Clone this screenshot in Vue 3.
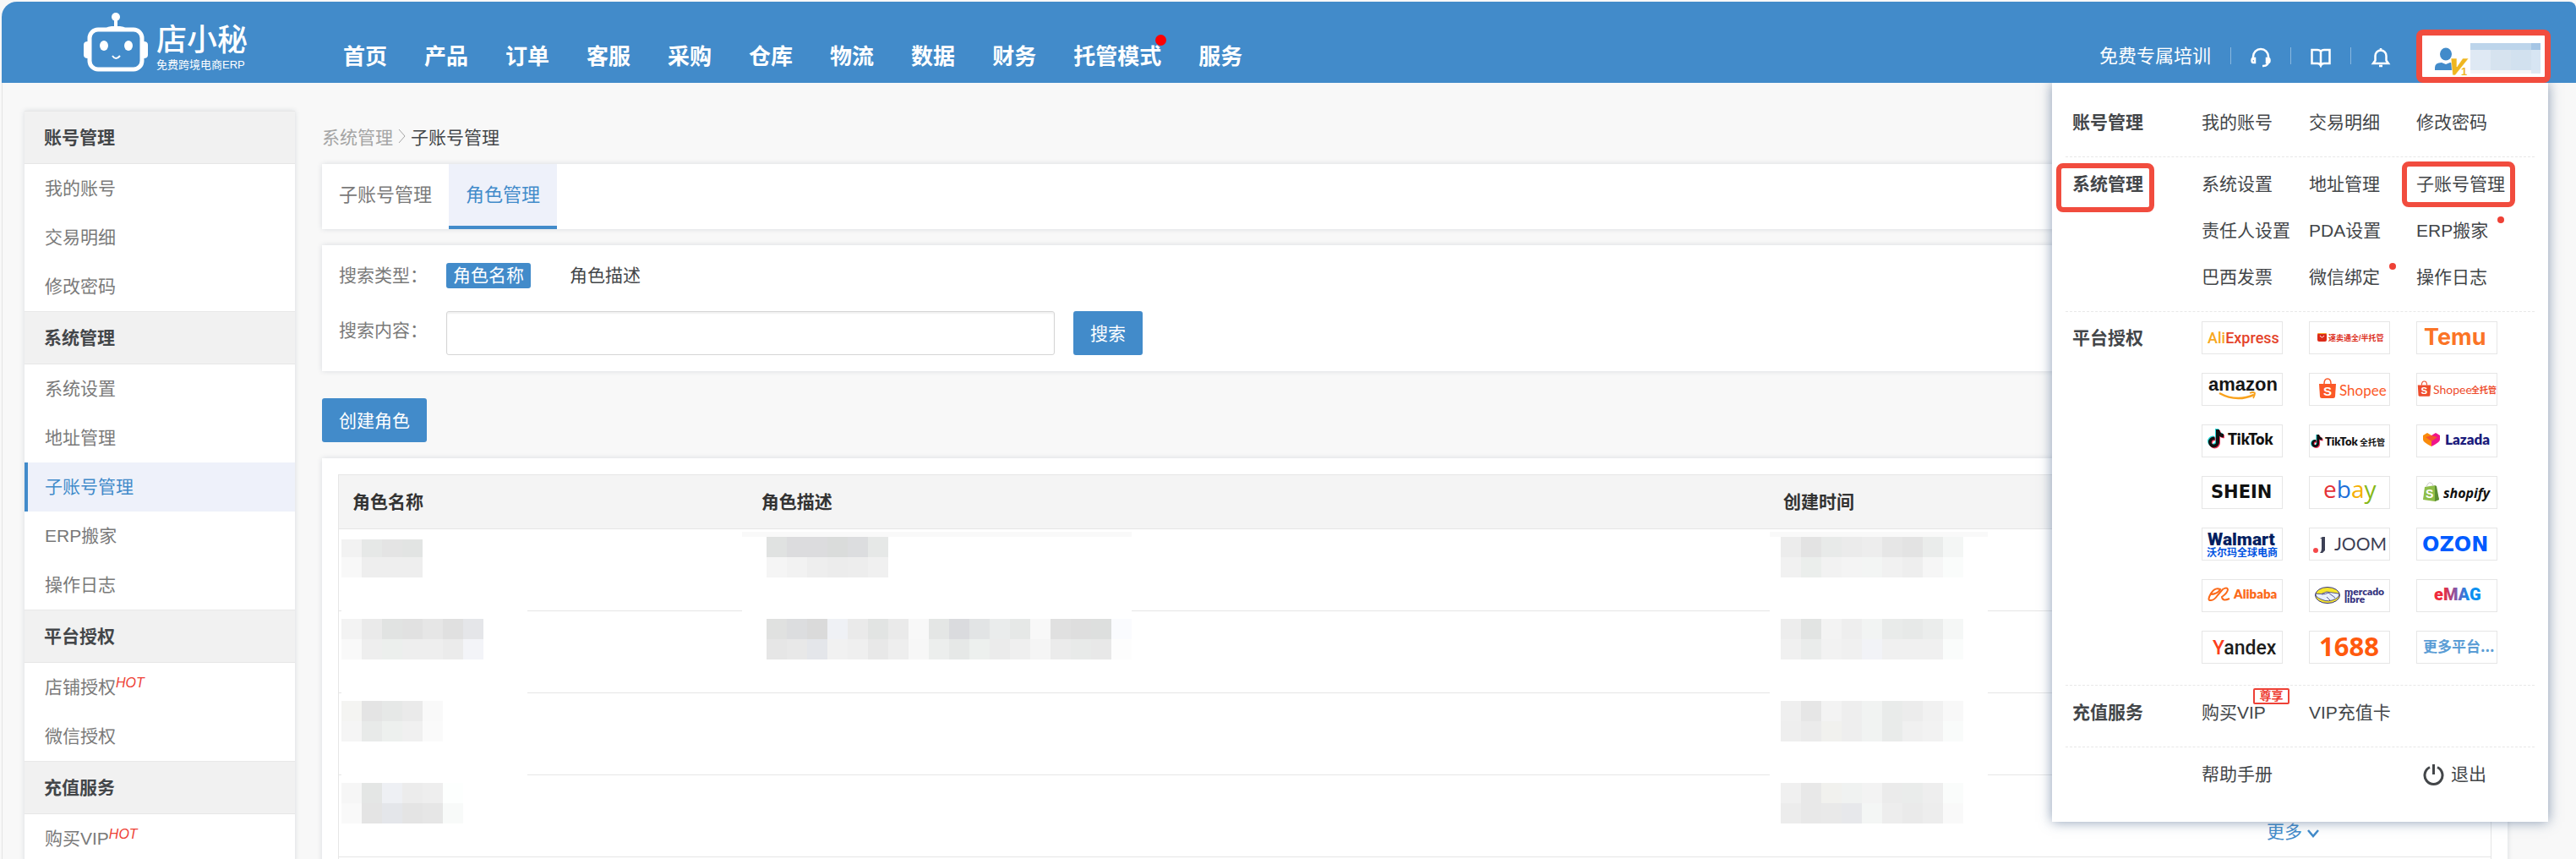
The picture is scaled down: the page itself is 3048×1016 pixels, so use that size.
<script setup>
import { ref } from 'vue';

const keyword = ref('');
const searchType = ref('角色名称');

const navs = [
  { name: '首页' }, { name: '产品' }, { name: '订单' }, { name: '客服' },
  { name: '采购' }, { name: '仓库' }, { name: '物流' }, { name: '数据' },
  { name: '财务' }, { name: '托管模式', dot: true }, { name: '服务' },
];

const sideMenus = [
  { title: '账号管理', items: [{ name: '我的账号' }, { name: '交易明细' }, { name: '修改密码' }] },
  {
    title: '系统管理',
    items: [
      { name: '系统设置' }, { name: '地址管理' }, { name: '子账号管理', active: true },
      { name: 'ERP搬家' }, { name: '操作日志' },
    ],
  },
  { title: '平台授权', items: [{ name: '店铺授权', hot: true }, { name: '微信授权' }] },
  { title: '充值服务', items: [{ name: '购买VIP', hot: true }] },
];

const systemLinks = [
  { name: '系统设置' }, { name: '地址管理' }, { name: '子账号管理', mark: true },
  { name: '责任人设置' }, { name: 'PDA设置' }, { name: 'ERP搬家', dot: true },
  { name: '巴西发票' }, { name: '微信绑定', dot: true }, { name: '操作日志' },
];

// masked cell values: two lines of 24px tiles, first is the height of the upper line
const rows = [
  {
    name: { first: 21, tiles: ['#f2f2f2 #e6e8e7 #e4e4e4 #e2e4e3', '#f8f8f8 #eeeeee #eeeeee #eeeeee'] },
    desc: { tiles: ['#e0e2e1 #dcdcde #dcdcde #dadcdb #dcdddf #e6e8e7', '#f5f5f5 #f2f2f2 #eeeeee #ececec #ededed #f0f0f0'] },
    time: { tiles: ['#ececec #e3e3e3 #e8eae9 #ebebeb #ededed #e6e6e6 #e3e3e3 #eaeceb #f4f6f5', '#f1f1f1 #ebeeec #f2f2f2 #f4f4f4 #f3f5f4 #f1f1f1 #eeeeee #f6f6f6 #fafcfb'] },
    bar: true,
  },
  {
    name: { tiles: ['#f3f3f3 #eaeaea #e1e3e2 #e1e1e1 #e6e6e6 #e0e0e0 #e5e6e9', '#f9f9f9 #eeeeee #ecefed #eeeeee #eeeeee #ebebeb #f3f4f8'] },
    desc: { tiles: ['#e0e1e0 #dcdddf #dadada #eff1f5 #eaeaea #e2e4e3 #eaeaea #f8f8f8 #e4e6e5 #dadbde #e2e4e5 #eaecec #e6e8e7 #f8f8f8 #e0e0e0 #dedede #dddfde #fafbfe', '#e6e6e6 #e8e8e8 #e4e6ea #f1f1f1 #efefef #e8e8e8 #eeeeee #f7f7f7 #eceeed #e6e8e7 #edf0ee #ebebeb #efefef #f5f5f5 #ebebeb #e8eae9 #e8e8e8 #fdfdfd'] },
    time: { tiles: ['#ededed #e2e4e3 #f3f3f3 #eeeeee #f2f4f3 #e9ebea #e7e9e8 #ebedec #f5f7f6', '#f0f0f0 #eaeceb #f2f2f2 #f0f0f0 #f2f3f7 #f0f0f0 #f0f0f0 #f0f0f0 #fafcfb'] },
  },
  {
    name: { tiles: ['#f4f4f2 #e4e4e4 #e6e8e7 #eaeaea #f9f9f9', '#f5f5f5 #e8eae9 #edf0ee #f0f0f0 #fafafa'] },
    time: { tiles: ['#efefef #e6e6e6 #f3f3f3 #eeeeee #f1f3f2 #e9ebea #ececec #f1f1f1 #f8f8f8', '#eeeeee #ebebeb #f1f1ee #eeeeee #f1f3f2 #e9ebea #f0f0f0 #f2f2f2 #f9fbfa'] },
  },
  {
    name: { tiles: ['#f6f6f6 #e4e6e5 #eef0f4 #ececec #eeeeee #fdfffe', '#f9f9f9 #e4e4e4 #e4e6ea #e4e4e4 #e6e6e6 #f8faf9'] },
    time: { tiles: ['#f0f0f0 #e8e8e8 #f1f1ee #f0f2f1 #f3f3f3 #ebebeb #eaeceb #eeeeee #fafcfb', '#ececec #e8e8e8 #e9e9e9 #e7e8eb #f4f6f5 #ededed #eaeaea #ededed #f9f9f9'] },
    more: true,
  },
  {},
];

const cols = ['name', 'desc', 'time'];

const toTiles = (cell) => {
  const first = cell.first || 24;
  return cell.tiles.flatMap((line, i) =>
    line.split(' ').map((fill, x) => ({ fill, x: x * 24, y: i ? 24 : 24 - first, h: i ? 24 : first }))
  );
};

const notePath = 'M9 0h4c.3 3 2 5 5 5.3v4c-2 0-3.600-.6-5-1.600v7.300a6.500 6.500 0 1 1-6.500-6.500l1 .1v4a2.600 2.600 0 1 0 1.500 2.400z';
const bagPath = 'M1 6h20l-1 15q-.2 2-2.200 2H4.200Q2.200 23 2 21z';
</script>

<template>
  <div class="page">
    <header class="header">
      <a class="logo" href="#">
        <svg width="76" height="70" viewBox="0 0 76 70" fill="none">
          <ellipse cx="38" cy="5" rx="5" ry="5" fill="#fff" />
          <path d="M38 8v10" stroke="#fff" stroke-width="4" />
          <path d="M25 19q4-3 8-3h10q4 0 8 3z" fill="#fff" />
          <rect x="7" y="20" width="62" height="47" rx="10" stroke="#fff" stroke-width="5" />
          <path d="M5 34q-5 0-5 4v12q0 4 5 4zM71 34q5 0 5 4v12q0 4-5 4z" fill="#fff" />
          <ellipse cx="24" cy="39" rx="5" ry="6" fill="#fff" />
          <ellipse cx="53" cy="39" rx="5" ry="6" fill="#fff" />
          <path d="M34 51q4 6 9 0" stroke="#fff" stroke-width="2" />
        </svg>
        <span class="brand">
          <span class="brand-name">店小秘</span>
          <span class="brand-sub">免费跨境电商ERP</span>
        </span>
      </a>
      <nav class="nav">
        <a v-for="nav in navs" :key="nav.name" href="#">{{ nav.name }}<i v-if="nav.dot" class="nav-dot"></i></a>
      </nav>
      <div class="tools">
        <a class="training" href="#">免费专属培训</a>
        <button class="tool" aria-label="客服">
          <svg width="24" height="24" viewBox="0 0 24 24" fill="none" stroke="#fff" stroke-width="2.5">
            <path d="M3 15v-4a9 9 0 0 1 18 0v5q0 6-6 6h-1" />
            <path d="M3 13h2v5H3q-1.500 0-1.500-2.500T3 13zM21 13h-2v5h2q1.500 0 1.500-2.500T21 13z" />
          </svg>
        </button>
        <button class="tool" aria-label="手册">
          <svg width="24" height="24" viewBox="0 0 24 24" fill="none" stroke="#fff" stroke-width="2.5">
            <path d="M12 5q-1-2-4-2H1.500v16H8q3 0 4 2.500 1-2.500 4-2.500h6.500V3H16q-3 0-4 2zM12 5v14" />
          </svg>
        </button>
        <button class="tool" aria-label="通知">
          <svg width="24" height="24" viewBox="0 0 24 24" fill="none" stroke="#fff" stroke-width="2.5">
            <path d="M12 1v2M3 19h18l-2.500-3.500V10a6.500 6.500 0 0 0-13 0v5.500zM10 22h4" />
          </svg>
        </button>
        <div class="user">
          <svg width="130" height="40" viewBox="0 0 130 40">
            <ellipse cx="18" cy="13" rx="7" ry="7.5" fill="#428bca" />
            <path d="M5 32v-3q0-6 8-6l5 2 5-2q8 0 8 6v3z" fill="#428bca" />
            <path d="M24 18h7v10l7-10h7L29 38h-3z" fill="#efb61f" stroke="#fff" stroke-width=".6" />
            <text x="36" y="38" font-size="13" font-weight="700" fill="#efb61f">1</text>
            <path d="M47 0h72v8H47z" fill="#bdd5eb" />
            <path d="M119 0h11v8h-11z" fill="#a6c6e5" />
            <path d="M47 8h24v24H47z" fill="#dfe9f4" />
            <path d="M71 8h24v24H71z" fill="#d6e3ef" />
            <path d="M95 8h24v24H95z" fill="#d2e1ef" />
            <path d="M119 8h11v24h-11z" fill="#d7e5f3" />
            <path d="M47 32h72v4H47z" fill="#f4f5f6" />
            <path d="M119 32h11v4h-11z" fill="#dfe9f2" />
          </svg>
        </div>
      </div>

      <div class="menu">
        <section class="menu-row">
          <h3>账号管理</h3>
          <a href="#">我的账号</a>
          <a href="#">交易明细</a>
          <a href="#">修改密码</a>
        </section>
        <section class="menu-row">
          <h3 class="mark mark-title">系统管理</h3>
          <div class="links">
            <a v-for="link in systemLinks" :key="link.name" href="#" :class="{ mark: link.mark }">
              {{ link.name }}<i v-if="link.dot" class="link-dot"></i>
            </a>
          </div>
        </section>
        <section class="menu-row platforms">
          <h3>平台授权</h3>
          <div class="links">
            <a class="card" href="#">
              <svg viewBox="0 0 94 37"><text class="roboto medium" x="6" y="25" font-size="18"><tspan fill="#f7a823">Ali</tspan><tspan fill="#e4432a">Express</tspan></text></svg>
            </a>
            <a class="card" href="#">
              <svg viewBox="0 0 94 37">
                <rect x="9" y="13" width="11" height="10" rx="2" fill="#dc2b19" />
                <path d="M9 14q0-1 2-1h7q2 0 2 1z" fill="#f7a823" />
                <path d="M12 16q2.500 4 5 0" fill="none" stroke="#fff" />
                <text class="bold" x="22" y="22" font-size="9" fill="#dc2b19">速卖通全/半托管</text>
              </svg>
            </a>
            <a class="card" href="#">
              <svg viewBox="0 0 94 37"><text class="inter" x="8" y="27" font-size="27" fill="#fb7426">Temu</text></svg>
            </a>
            <a class="card" href="#">
              <svg viewBox="0 0 94 37">
                <text class="bold" x="7" y="20" font-size="22" fill="#161616">amazon</text>
                <path d="M20 23q20 11 41 2" fill="none" stroke="#f9a11b" stroke-width="2.5" />
                <path d="M56 23q4-2 6 0 0 3-2 6" fill="none" stroke="#f9a11b" stroke-width="1.8" />
              </svg>
            </a>
            <a class="card" href="#">
              <svg viewBox="0 0 94 37">
                <g transform="translate(10 6)">
                  <path :d="bagPath" fill="#fb5827" />
                  <path d="M7 6q0-6 4-6t4 6" fill="none" stroke="#fb5827" stroke-width="1.5" />
                  <text class="bold" x="6" y="20" font-size="15" fill="#fff">S</text>
                </g>
                <text class="lato" x="35" y="26" font-size="17" fill="#fb5827">Shopee</text>
              </svg>
            </a>
            <a class="card" href="#">
              <svg viewBox="0 0 94 37">
                <g transform="translate(0 9) scale(.77)">
                  <path :d="bagPath" fill="#ee4d2d" />
                  <path d="M7 6q0-6 4-6t4 6" fill="none" stroke="#ee4d2d" stroke-width="1.5" />
                  <text class="bold" x="6" y="20" font-size="15" fill="#fff">S</text>
                </g>
                <text class="lato" x="19" y="24" font-size="14" fill="#ee4d2d">Shopee</text>
                <text class="bold" x="64" y="23" font-size="10" fill="#ee4d2d">全托管</text>
              </svg>
            </a>
            <a class="card" href="#">
              <svg viewBox="0 0 94 37">
                <path :d="notePath" transform="translate(6 4)" fill="#25d8d8" />
                <path :d="notePath" transform="translate(8 6)" fill="#f6355d" />
                <path :d="notePath" transform="translate(7 5)" fill="#111" />
                <text class="lato heavy" x="30" y="23" font-size="18" fill="#111">TikTok</text>
              </svg>
            </a>
            <a class="card" href="#">
              <svg viewBox="0 0 94 37">
                <path :d="notePath" transform="translate(1 11) scale(.7)" fill="#25d8d8" />
                <path :d="notePath" transform="translate(3 12) scale(.7)" fill="#f6355d" />
                <path :d="notePath" transform="translate(2 11) scale(.7)" fill="#111" />
                <text class="lato heavy" x="18" y="24" font-size="13" fill="#111">TikTok</text>
                <text class="bold" x="59" y="24" font-size="10" fill="#111">全托管</text>
              </svg>
            </a>
            <a class="card" href="#">
              <svg viewBox="0 0 94 37">
                <path d="M7 12l5-3 5 3v13q-10-5-10-8z" fill="#f98b0c" />
                <path d="M17 12l5-3 5 3v5q0 3-10 8z" fill="#f0148b" />
                <path d="M10 14l7-2 7 2-7 5z" fill="#f5542e" />
                <text class="lato heavy" x="33" y="23" font-size="17" fill="#1c1c7c">Lazada</text>
              </svg>
            </a>
            <a class="card" href="#">
              <svg viewBox="0 0 94 37"><text class="dejavu" x="10" y="25" font-size="21" fill="#111">SHEIN</text></svg>
            </a>
            <a class="card" href="#">
              <svg viewBox="0 0 94 37">
                <text class="open medium" x="16" y="25" font-size="28"><tspan fill="#e53238">e</tspan><tspan fill="#1b6fd8">b</tspan><tspan fill="#f5af02">a</tspan><tspan fill="#86b817">y</tspan></text>
              </svg>
            </a>
            <a class="card" href="#">
              <svg viewBox="0 0 94 37">
                <path d="M9 12l12-2 5 17-5 2-14-2z" fill="#8fbe49" />
                <path d="M21 10l2 1 3 16-5 2z" fill="#5b8e33" />
                <path d="M11 12q2-6 5-5t3 4" fill="none" stroke="#c8c8c8" />
                <text class="bold" x="10" y="25" font-size="14" fill="#fff">S</text>
                <text class="open bold italic" x="31" y="25" font-size="16" fill="#111">shopify</text>
              </svg>
            </a>
            <a class="card" href="#">
              <svg viewBox="0 0 94 37">
                <text class="roboto black" x="6" y="20" font-size="21" fill="#041e60">Walmart</text>
                <text class="bold" x="5" y="33" font-size="12" fill="#0053e2">沃尔玛全球电商</text>
              </svg>
            </a>
            <a class="card" href="#">
              <svg viewBox="0 0 94 37">
                <circle cx="7" cy="26" r="3" fill="#f5484a" />
                <path d="M12 12l3-2h3v16l-3 3h-3q2-2 2-5V12z" fill="#3c4055" />
                <text class="lato" x="29" y="26" font-size="21" fill="#3c4055">JOOM</text>
              </svg>
            </a>
            <a class="card" href="#">
              <svg viewBox="0 0 94 37"><text class="dejavu" x="6" y="27" font-size="24" fill="#005bff">OZON</text></svg>
            </a>
            <a class="card" href="#">
              <svg viewBox="0 0 94 37">
                <path d="M9 17q9 0 12-6-6-3-11 5-5 9 0 8 4 0 8-6l6-7q5-3 6 0 0 4-7 9 1 6 9 2" fill="none" stroke="#fb6a1a" stroke-width="2" />
                <text class="lato heavy" x="37" y="22" font-size="15" fill="#fb6a1a">Alibaba</text>
              </svg>
            </a>
            <a class="card" href="#">
              <svg viewBox="0 0 94 37">
                <ellipse cx="21" cy="18" rx="14.5" ry="9.5" fill="#f5e62d" stroke="#37347e" />
                <path d="M7 16q7 2 13-2l14 2q2 3-3 6-9 5-17 1-8-3-7-7z" fill="#e8f0fb" stroke="#37347e" stroke-width=".8" />
                <path d="M14 17q5 0 8-2l8 6M20 20l4 4" fill="none" stroke="#37347e" stroke-width=".8" />
                <text class="lato heavy" x="41" y="18" font-size="12" fill="#37347e">mercado</text>
                <text class="lato heavy" x="41" y="27" font-size="12" fill="#37347e">libre</text>
              </svg>
            </a>
            <a class="card" href="#">
              <svg viewBox="0 0 94 37">
                <defs>
                  <linearGradient id="emag" x1="20" x2="75" y1="0" y2="0" gradientUnits="userSpaceOnUse">
                    <stop offset=".2" stop-color="#ef2a3c" />
                    <stop offset=".5" stop-color="#7a5bb5" />
                    <stop offset=".75" stop-color="#0c8ff0" />
                  </linearGradient>
                </defs>
                <text class="roboto black" x="20" y="24" font-size="20" fill="url(#emag)">eMAG</text>
              </svg>
            </a>
            <a class="card" href="#">
              <svg viewBox="0 0 94 37"><text class="roboto medium" x="12" y="27" font-size="23"><tspan fill="#fc3f1d">Y</tspan><tspan fill="#1d1d1d">andex</tspan></text></svg>
            </a>
            <a class="card" href="#">
              <svg viewBox="0 0 94 37"><text class="open bold" x="11" y="29" font-size="31" fill="#ff5a0e">1688</text></svg>
            </a>
            <a class="card" href="#">
              <svg viewBox="0 0 94 37"><text class="cjk bold" x="7" y="24" font-size="17" fill="#5b9dd5">更多平台...</text></svg>
            </a>
          </div>
        </section>
        <section class="menu-row">
          <h3>充值服务</h3>
          <a href="#">购买VIP<i class="badge">尊享</i></a>
          <a href="#">VIP充值卡</a>
        </section>
        <section class="menu-row">
          <a class="help" href="#">帮助手册</a>
          <button class="logout">
            <svg width="25" height="25" viewBox="0 0 25 25" fill="none" stroke="#434649" stroke-width="3">
              <path d="M8 3.500a10.500 10.500 0 1 0 9 0M12.500 0v12" />
            </svg>
            退出
          </button>
        </section>
      </div>
    </header>

    <div class="content">
      <aside class="sidebar">
        <template v-for="group in sideMenus" :key="group.title">
          <h2>{{ group.title }}</h2>
          <a v-for="item in group.items" :key="item.name" href="#" :class="{ active: item.active }">
            {{ item.name }}<em v-if="item.hot">HOT</em>
          </a>
        </template>
      </aside>

      <main class="main">
        <div class="crumbs">
          <a href="#">系统管理</a>
          <svg width="9" height="16" viewBox="0 0 9 16" fill="none" stroke="#a5a5a5"><path d="M1 0l7 8-7 8" /></svg>
          <span>子账号管理</span>
        </div>

        <div class="panel tabs">
          <a href="#">子账号管理</a>
          <a class="active" href="#">角色管理</a>
        </div>

        <form class="panel search" @submit.prevent>
          <div class="field">
            <span class="label">搜索类型：</span>
            <div class="types">
              <button
                v-for="type in ['角色名称', '角色描述']"
                :key="type"
                type="button"
                :class="{ active: type === searchType }"
                @click="searchType = type"
              >{{ type }}</button>
            </div>
          </div>
          <div class="field">
            <label class="label" for="keyword">搜索内容：</label>
            <input id="keyword" v-model="keyword" type="text">
            <button class="btn" type="submit">搜索</button>
          </div>
        </form>

        <button class="btn create">创建角色</button>

        <div class="panel list">
          <table>
            <thead>
              <tr>
                <th class="col-name">角色名称</th>
                <th class="col-desc">角色描述</th>
                <th class="col-time">创建时间</th>
                <th></th>
              </tr>
            </thead>
            <tbody>
              <tr v-for="(row, i) in rows" :key="i">
                <td v-for="col in cols" :key="col" :class="'cell-' + col">
                  <i v-if="row.bar && col !== 'name'" class="bar"></i>
                  <svg v-if="row[col]" class="mosaic" height="48">
                    <rect v-for="(t, n) in toTiles(row[col])" :key="n" :x="t.x" :y="t.y" width="24" :height="t.h" :fill="t.fill" />
                  </svg>
                  <i v-if="row[col] && i < 3 && !(col === 'desc' && i)" class="cover"></i>
                </td>
                <td class="cell-action">
                  <a v-if="row.more" href="#">更多
                    <svg width="14" height="10" viewBox="0 0 14 10" fill="none" stroke="#428bca" stroke-width="2.5"><path d="M1 1l6 7 6-7" /></svg>
                  </a>
                </td>
              </tr>
            </tbody>
          </table>
        </div>
      </main>
    </div>
  </div>
</template>

<style>
body {
  background: #f8f8f8;
}
</style>

<style scoped>
*,
*::after {
  box-sizing: border-box;
}

.page {
  display: flex;
  flex-direction: column;
  height: 100vh;
  padding: 2px 0 0 2px;
  font-family: "Liberation Sans", "Noto Sans CJK SC", sans-serif;
  font-size: 21px;
  color: #434649;
}

a {
  color: inherit;
  text-decoration: none;
}

h2, h3 {
  margin: 0;
  font-size: 21px;
}

i {
  font-style: normal;
}

button {
  padding: 0;
  border: 0;
  background: none;
  color: inherit;
  font: inherit;
  cursor: pointer;
}

/* header */
.header {
  position: relative;
  z-index: 2;
  display: flex;
  flex: none;
  height: 96px;
  padding: 0 30px 0 97px;
  background: #428bca;
  border-radius: 18px 8px 0 0;
  color: #fff;
}

.logo {
  display: flex;
  gap: 10px;
  width: 307px;
  padding-top: 13px;
}

.brand {
  display: flex;
  flex-direction: column;
  padding-top: 14px;
}

.brand-name {
  font-size: 36px;
  font-weight: 500;
  line-height: 38px;
}

.brand-sub {
  font-size: 13px;
  line-height: 20px;
}

.nav {
  display: flex;
  gap: 44px;
  font-size: 26px;
  font-weight: 700;
  line-height: 130px;
}

.nav a {
  position: relative;
}

.nav-dot {
  position: absolute;
  top: 39px;
  right: -6px;
  width: 13px;
  height: 13px;
  border-radius: 50%;
  background: #f00;
}

.tools {
  display: flex;
  align-items: flex-start;
  margin-left: auto;
}

.training {
  padding-right: 23px;
  font-size: 22px;
  line-height: 130px;
}

.tool {
  height: 20px;
  margin-top: 54px;
  padding: 0 23px;
  border-left: 1px solid #8ab7de;
}

.tool svg {
  display: block;
}

.user {
  width: 159px;
  height: 63px;
  margin-top: 33px;
  margin-left: 7px;
  padding: 9px 0 0 10px;
  border: 7px solid #f14c3e;
  border-radius: 8px;
  background: #fff;
}

.user svg {
  display: block;
}

/* account menu */
.menu {
  position: absolute;
  top: 96px;
  right: 33px;
  width: 587px;
  padding: 15px 16px 16px;
  background: #fff;
  box-shadow: 0 0 14px rgba(60, 90, 130, 0.6);
  clip-path: inset(0 -20px -20px -20px);
  color: #434649;
}

.menu-row {
  display: grid;
  grid-template-columns: 161px 127px 127px 1fr;
  padding: 12px 0 20px;
  border-bottom: 1px dashed #e8e8e8;
  line-height: 40px;
}

.menu-row:last-child {
  border-bottom: 0;
}

.menu-row h3 {
  padding-left: 8px;
}

.menu-row a {
  position: relative;
  white-space: nowrap;
}

.links {
  display: grid;
  grid-column: 2 / 5;
  grid-template-columns: 127px 127px 1fr;
  gap: 15px 0;
}

.mark {
  position: relative;
}

.mark::after {
  content: '';
  position: absolute;
  top: -7px;
  left: -17px;
  width: 134px;
  height: 54px;
  border: 6px solid #f14c3e;
  border-radius: 8px;
}

.mark-title::after {
  top: -5px;
  left: -11px;
  width: 116px;
  height: 58px;
}

.link-dot {
  position: absolute;
  top: 3px;
  margin-left: 11px;
  width: 8px;
  height: 8px;
  border-radius: 50%;
  background: #ee4136;
}

.platforms {
  padding: 11px 0 25px;
}

.platforms .links {
  gap: 22px 0;
}

.card {
  width: 96px;
  height: 39px;
  border: 1px solid #e6e6e6;
}

.card svg {
  display: block;
  width: 94px;
  height: 37px;
  overflow: visible;
}

.roboto {
  font-family: Roboto, sans-serif;
}

.inter {
  font-family: Inter, sans-serif;
  font-weight: 700;
}

.lato {
  font-family: Lato, sans-serif;
}

.open {
  font-family: "Open Sans", sans-serif;
}

.dejavu {
  font-family: "DejaVu Sans", sans-serif;
  font-weight: 700;
}

.cjk {
  font-family: "Noto Sans CJK SC", sans-serif;
}

.medium {
  font-weight: 500;
}

.bold {
  font-weight: 700;
}

.heavy {
  font-weight: 800;
}

.black {
  font-weight: 900;
}

.italic {
  font-style: italic;
}

.badge {
  position: absolute;
  top: -9px;
  left: 61px;
  width: 43px;
  height: 19px;
  border: 2px solid #ee4136;
  border-radius: 2px;
  background: #fff;
  color: #ee4136;
  font-size: 14px;
  font-weight: 700;
  line-height: 15px;
  text-align: center;
}

.help {
  grid-column: 2;
}

.logout {
  display: flex;
  grid-column: 4;
  align-items: center;
  gap: 8px;
  padding-left: 8px;
}

/* content */
.content {
  display: flex;
  flex: 1;
  gap: 32px;
  min-height: 0;
  padding: 33px 81px 0 26px;
  border-left: 1px solid #e4e4e4;
  overflow: hidden auto;
  scrollbar-width: none;
}

.sidebar {
  flex: none;
  align-self: flex-start;
  width: 320px;
  background: #fff;
  box-shadow: 0 0 6px rgba(40, 60, 80, 0.15);
  color: #7a7a7a;
}

.sidebar h2 {
  height: 63px;
  padding-left: 23px;
  border-top: 1px solid #e8e8e8;
  border-bottom: 1px solid #e6e6e6;
  background: #f1f1f1;
  color: #434649;
  line-height: 62px;
}

.sidebar a {
  display: block;
  height: 58px;
  padding-left: 24px;
  line-height: 58px;
}

.sidebar .active {
  padding-left: 20px;
  border-left: 4px solid #428bca;
  background: #eef1fa;
  color: #428bca;
}

.sidebar em {
  position: relative;
  top: -7px;
  color: #ee4136;
  font-size: 16px;
}

.main {
  flex: 1;
  min-width: 0;
}

.crumbs {
  display: flex;
  align-items: center;
  gap: 6px;
  height: 63px;
  padding-bottom: 4px;
}

.crumbs a {
  color: #a5a5a5;
}

.panel {
  margin-bottom: 19px;
  background: #fff;
  box-shadow: 0 0 6px rgba(40, 60, 80, 0.15);
}

.tabs {
  display: flex;
  color: #7a7a7a;
  font-size: 22px;
}

.tabs a {
  padding: 0 20px;
  border-bottom: 4px solid transparent;
  line-height: 73px;
}

.tabs .active {
  border-color: #428bca;
  background: #eef1fa;
  color: #428bca;
}

.search {
  display: flex;
  flex-direction: column;
  gap: 27px;
  margin-bottom: 32px;
  padding: 21px 20px 19px;
}

.field {
  display: flex;
}

.label {
  width: 127px;
  color: #7a7a7a;
  line-height: 30px;
}

label.label {
  line-height: 46px;
}

.types {
  display: flex;
  gap: 38px;
}

.types button {
  padding: 0 8px;
  border-radius: 3px;
  line-height: 30px;
}

.types .active {
  background: #428bca;
  color: #fff;
}

.field input {
  width: 720px;
  height: 52px;
  margin-right: 22px;
  padding: 0 12px;
  border: 1px solid #d5d5d5;
  border-radius: 3px;
  box-shadow: inset 0 2px 2px rgba(0, 0, 0, 0.06);
  font: inherit;
  outline: 0;
}

.btn {
  height: 52px;
  padding: 0 20px 3px;
  border-radius: 3px;
  background: #428bca;
  color: #fff;
}

.create {
  display: block;
  margin-bottom: 19px;
}

.list {
  padding: 19px 19px 20px;
}

table {
  width: 100%;
  border: 1px solid #e6e6e6;
  border-bottom: 0;
  border-spacing: 0;
  table-layout: fixed;
}

th {
  height: 64px;
  padding: 0 16px 3px;
  border-bottom: 1px solid #e6e6e6;
  background: #f4f4f4;
  color: #333;
  text-align: left;
}

.col-name {
  width: 19%;
}

.col-desc {
  width: 47.5%;
}

.col-time {
  width: 15%;
}

td {
  position: relative;
  height: 97px;
  padding: 9px 0 0 3px;
  border-bottom: 1px solid #e6e6e6;
  vertical-align: top;
}

.cell-desc {
  padding-left: 22px;
}

.cell-time {
  padding-left: 13px;
}

.mosaic {
  display: block;
  width: 100%;
}

.bar,
.cover {
  position: absolute;
  left: 0;
  width: 258px;
}

.bar {
  top: 3px;
  height: 6px;
  background: #f9f9f9;
}

.cover {
  bottom: -1px;
  height: 1px;
  background: #fff;
}

.cell-name .cover {
  left: 3px;
  width: 220px;
}

.cell-desc .bar,
.cell-desc .cover {
  left: -7px;
  width: 461px;
}

.cell-action {
  padding-top: 50px;
  color: #428bca;
  text-align: center;
}
</style>
